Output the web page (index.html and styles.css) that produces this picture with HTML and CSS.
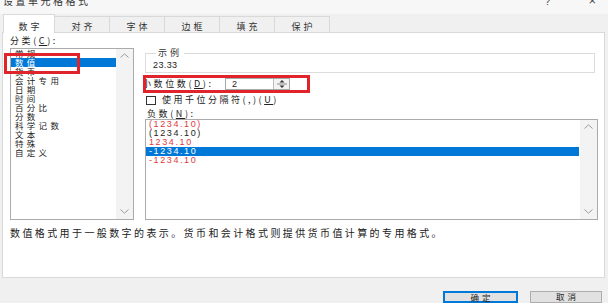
FILE: index.html
```html
<!DOCTYPE html>
<html lang="zh-CN">
<head>
<meta charset="utf-8">
<title>设置单元格格式</title>
<link rel="stylesheet" href="styles.css">
</head>
<body>
<div class="titlebar">
  <span class="title">设置单元格格式</span>
  <span class="help">?</span>
  <span class="close">×</span>
</div>
<div class="tabs">
  <div class="tab active">数字</div>
  <div class="tab">对齐</div>
  <div class="tab">字体</div>
  <div class="tab">边框</div>
  <div class="tab">填充</div>
  <div class="tab">保护</div>
</div>
<div class="panel">
  <div class="cols">
    <div class="left">
      <div class="label">分类(<u>C</u>):</div>
      <div class="listbox cat">
        <ul class="items">
          <li>常规</li>
          <li class="sel">数值</li>
          <li>货币</li>
          <li>会计专用</li>
          <li>日期</li>
          <li>时间</li>
          <li>百分比</li>
          <li>分数</li>
          <li>科学记数</li>
          <li>文本</li>
          <li>特殊</li>
          <li>自定义</li>
        </ul>
        <div class="vscroll">
          <svg class="arr" width="9" height="5" viewBox="0 0 9 5"><polyline points="0.5,4.5 4.5,0.8 8.5,4.5" fill="none" stroke="#9a9a9a" stroke-width="1"/></svg>
          <svg class="arr" width="9" height="5" viewBox="0 0 9 5"><polyline points="0.5,0.5 4.5,4.2 8.5,0.5" fill="none" stroke="#9a9a9a" stroke-width="1"/></svg>
        </div>
        <div class="mark mark-cat"></div>
      </div>
    </div>
    <div class="right">
      <fieldset class="sample">
        <legend>示例</legend>
        <div class="sample-val">23.33</div>
      </fieldset>
      <div class="decimal">
        <span class="dec-label">小数位数(<u>D</u>):</span>
        <div class="spin-input">
          <span class="val">2</span>
          <span class="spin">
            <svg width="14" height="10" viewBox="0 0 14 10"><line x1="2" y1="5" x2="12" y2="5" stroke="#8a8a8a" stroke-width="1"/><polygon points="4.5,3.5 7,1 9.5,3.5" fill="#333"/><polygon points="4.5,6.5 7,9 9.5,6.5" fill="#333"/></svg>
          </span>
        </div>
      </div>
      <label class="check"><span class="box"></span><span class="ctext">使用千位分隔符(,)(<u>U</u>)</span></label>
      <div class="label neg-label">负数(<u>N</u>):</div>
      <div class="listbox neg">
        <ul class="items nums">
          <li class="red">(1234.10)</li>
          <li>(1234.10)</li>
          <li class="red">1234.10</li>
          <li class="sel">-1234.10</li>
          <li class="red">-1234.10</li>
        </ul>
        <div class="vscroll">
          <svg class="arr" width="9" height="5" viewBox="0 0 9 5"><polyline points="0.5,4.5 4.5,0.8 8.5,4.5" fill="none" stroke="#9a9a9a" stroke-width="1"/></svg>
          <svg class="arr" width="9" height="5" viewBox="0 0 9 5"><polyline points="0.5,0.5 4.5,4.2 8.5,0.5" fill="none" stroke="#9a9a9a" stroke-width="1"/></svg>
        </div>
      </div>
    </div>
  </div>
  <p class="desc">数值格式用于一般数字的表示。货币和会计格式则提供货币值计算的专用格式。</p>
</div>
<div class="buttons">
  <button class="btn primary">确定</button>
  <button class="btn">取消</button>
</div>
</body>
</html>
```
FILE: styles.css
```css
* { box-sizing: border-box; margin: 0; padding: 0; }
html, body { width: 608px; height: 303px; overflow: hidden; }
body {
  background: #f0f0f0;
  font-family: "Noto Sans CJK SC", "Noto Sans", sans-serif;
  font-size: 9px;
  line-height: 10px;
  color: #222;
}
u { text-decoration: underline; }
ul { list-style: none; }

.titlebar {
  display: flex;
  height: 14px;
  background: #f7f7f7;
  align-items: flex-start;
}
.title { margin: -4px 0 0 3px; font-size: 10px; letter-spacing: 2.5px; color: #333; }
.help { margin: -3px 0 0 auto; font-family: "Liberation Sans", sans-serif; font-size: 10px; color: #444; }
.close { margin: -4px 12px 0 38px; font-family: "Liberation Sans", sans-serif; font-size: 13px; color: #444; }

.tabs {
  display: flex;
  height: 18px;
  padding-left: 3px;
}
.tab {
  width: 55px;
  height: 16px;
  margin-top: 2px;
  padding-top: 5px;
  text-align: center;
  letter-spacing: 3px;
  text-indent: 3px;
  border-top: 1px solid #d9d9d9;
  border-right: 1px solid #d9d9d9;
  color: #333;
}
.tab.active {
  width: 52px;
  height: 19px;
  margin-top: 0;
  padding-top: 7px;
  background: #fff;
  border: 1px solid #d9d9d9;
  border-bottom: none;
  position: relative;
  z-index: 1;
}

.panel {
  margin-left: 2px;
  width: 603px;
  height: 246px;
  border: 1px solid #d9d9d9;
  background: #fff;
  padding: 3px 0 0 7px;
}
.cols { display: flex; gap: 11px; }
.left { width: 124px; }
.right { width: 453px; }
.label { letter-spacing: 2.6px; line-height: 10px; height: 10px; }

.listbox {
  display: flex;
  border: 1px solid #ababab;
  background: #fff;
  position: relative;
}
.listbox.cat { margin-top: 2px; height: 172px; }
.listbox.neg { height: 101px; }
.items { flex: 1; overflow: hidden; }
.items li { height: 9px; line-height: 9px; font-size: 8.5px; padding-left: 4px; letter-spacing: 3.3px; white-space: nowrap; }
.items li.sel { background: #0078d7; color: #fff; }
.vscroll {
  width: 17px;
  background: #f3f3f3;
  display: flex;
  flex-direction: column;
  justify-content: space-between;
  align-items: center;
  padding: 4px 0 5px;
}
.neg .vscroll { width: 18px; border-left: 1px solid #fff; }
.arr { display: block; }

.mark {
  position: absolute;
  border: 3px solid #e0242b;
}
.mark-cat { left: -7px; top: 4px; width: 76px; height: 21px; }

.sample {
  margin-top: 12px;
  width: 450px;
  border: 1px solid #dcdcdc;
  padding: 0 0 2px 7px;
}
.sample legend {
  margin-left: 3px;
  padding: 0 2px;
  line-height: 10px;
  letter-spacing: 3px;
  color: #333;
}
.sample-val {
  margin-top: 3px;
  line-height: 9px;
  font-family: "Liberation Sans", sans-serif;
  font-size: 9px;
  letter-spacing: 0.4px;
}

.decimal {
  margin: 2px 0 0 -2px;
  width: 167px;
  height: 18px;
  border: 3px solid #e0242b;
  display: flex;
  align-items: center;
  overflow: hidden;
}
.dec-label { flex: 0 0 83px; margin-left: -4px; letter-spacing: 2.6px; white-space: nowrap; }
.spin-input {
  width: 65px;
  height: 12px;
  border: 1px solid #a8a8a8;
  display: flex;
  align-items: center;
}
.spin-input .val { flex: 1; padding-left: 6px; font-family: "Liberation Sans", sans-serif; font-size: 9px; }
.spin { width: 16px; height: 10px; border-left: 1px solid #bdbdbd; display: flex; align-items: center; justify-content: center; background: #f3f3f3; }

.check {
  margin-top: 2px;
  height: 10px;
  display: flex;
  align-items: center;
}
.check .box { width: 10px; height: 9px; border: 1px solid #333; margin-left: 1px; background: #fff; }
.ctext { margin-left: 6px; letter-spacing: 2.5px; }

.neg-label { margin: 4px 0 0 2px; }
.nums li {
  font-family: "Liberation Sans", sans-serif;
  font-size: 9px;
  letter-spacing: 1.6px;
  padding-left: 3px;
}
.nums li.red { color: #dc3a40; }

.desc {
  margin-top: 8px;
  line-height: 10px;
  font-size: 10px;
  letter-spacing: 2.4px;
  color: #222;
  white-space: nowrap;
}

.buttons {
  display: flex;
  justify-content: flex-end;
  gap: 12px;
  padding-right: 6px;
  margin-top: 13px;
}
.btn {
  width: 72px;
  height: 12px;
  padding-bottom: 3px;
  border: 1px solid #adadad;
  background: #e1e1e1;
  font-family: "Noto Sans CJK SC", sans-serif;
  font-size: 8.5px;
  line-height: 8px;
  letter-spacing: 3px;
  text-indent: 3px;
  color: #222;
}
.btn.primary { width: 75px; border: 2px solid #0078d7; }
```
